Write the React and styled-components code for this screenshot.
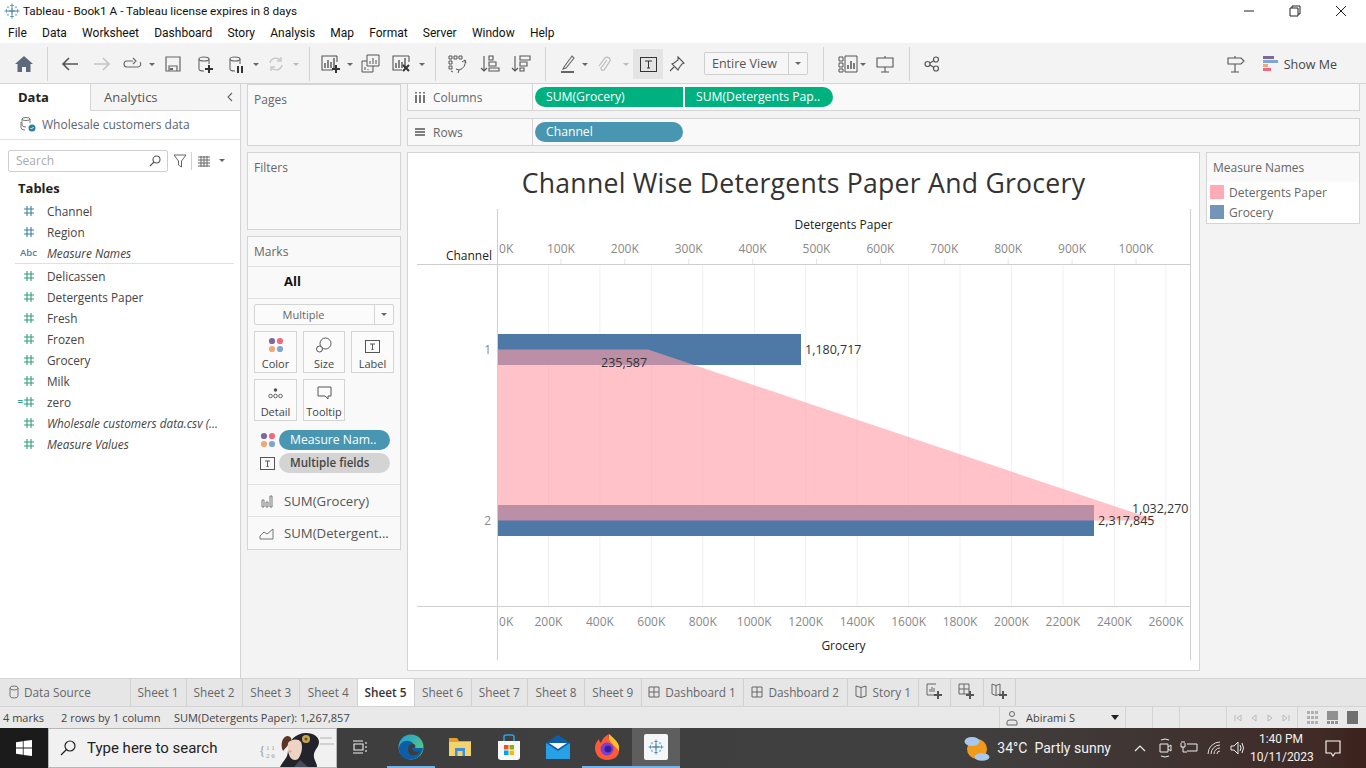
import React from 'react';
import styled, { createGlobalStyle } from 'styled-components';

const GlobalStyle = createGlobalStyle`
  html, body { margin: 0; padding: 0; overflow: hidden; background: #fff; }
  * { box-sizing: border-box; }
  body { font-family: "Open Sans", "Liberation Sans", sans-serif; color: #333; }
`;

const Page = styled.div`
  width: 1366px;
  height: 768px;
  display: flex;
  flex-direction: column;
  overflow: hidden;
`;

/* ---------- window chrome ---------- */
const TitleBar = styled.div`
  height: 22px;
  display: flex;
  align-items: center;
  padding-left: 4px;
  gap: 3px;
  font-family: Roboto, sans-serif;
  font-size: 11.75px;
  color: #111;
  background: #fff;
`;
const WindowButtons = styled.div`
  margin-left: auto;
  display: flex;
  align-items: center;
  padding-right: 2px;
`;
const WindowButton = styled.span`
  width: 46px;
  height: 22px;
  display: flex;
  align-items: center;
  justify-content: center;
`;
const MenuBar = styled.nav`
  height: 21px;
  display: flex;
  align-items: center;
  gap: 15.2px;
  padding-left: 8px;
  font-family: Roboto, sans-serif;
  font-size: 12px;
  color: #111;
  background: #fff;
`;

/* ---------- toolbar ---------- */
const Toolbar = styled.div`
  height: 41px;
  display: flex;
  align-items: center;
  padding-top: 2px;
  background: #f3f3f3;
  border-bottom: 1px solid #d4d4d4;
`;
const ToolSlot = styled.span`
  width: ${p => p.$w}px;
  height: 30px;
  flex: none;
  display: flex;
  align-items: center;
  justify-content: center;
  margin-left: ${p => p.$ml || 0}px;
  margin-right: ${p => p.$mr || 0}px;
  background: ${p => (p.$active ? '#e4e4e4' : 'transparent')};
`;
const ToolSep = styled.span`
  width: 1px;
  height: 34px;
  flex: none;
  background: #d2d2d2;
  margin-left: ${p => p.$ml || 0}px;
  margin-right: ${p => p.$mr || 0}px;
`;
const Caret = styled.span`
  width: 0;
  height: 0;
  border-left: 3px solid transparent;
  border-right: 3px solid transparent;
  border-top: 3px solid ${p => p.$color || '#666'};
`;
const FitSelect = styled.div`
  width: 104px;
  height: 23px;
  margin: -1px 0 0 13px;
  flex: none;
  display: flex;
  align-items: center;
  border: 1px solid #cfcfcf;
  border-radius: 2px;
  font-size: 12.5px;
  color: #555;
  background: #f6f6f6;
`;
const FitLabel = styled.span`
  flex: 1;
  padding-left: 7px;
  border-right: 1px solid #cfcfcf;
  line-height: 21px;
`;
const FitArrow = styled.span`
  width: 18px;
  display: flex;
  justify-content: center;
`;
const ToolRight = styled.div`
  margin-left: auto;
  display: flex;
  align-items: center;
  padding-right: 29px;
`;
const ShowMe = styled.div`
  margin-left: 17px;
  display: flex;
  align-items: center;
  gap: 6px;
  font-size: 12.5px;
  color: #444;
`;

/* ---------- workspace ---------- */
const Workspace = styled.div`
  height: 594px;
  display: flex;
  background: #f3f3f3;
`;
const DataPane = styled.aside`
  width: 241px;
  flex: none;
  display: flex;
  flex-direction: column;
  background: #fff;
  border-right: 1px solid #d4d4d4;
`;
const PaneTabs = styled.div`
  height: 27px;
  display: flex;
  font-size: 13px;
`;
const DataTab = styled.div`
  width: 90px;
  padding-left: 18px;
  line-height: 26px;
  font-weight: 700;
  color: #222;
`;
const AnalyticsTab = styled.div`
  flex: 1;
  display: flex;
  align-items: center;
  justify-content: space-between;
  padding: 0 5px 0 13px;
  background: #f5f5f5;
  border-left: 1px solid #d4d4d4;
  border-bottom: 1px solid #d4d4d4;
  color: #555;
`;
const SourceRow = styled.div`
  height: 29px;
  display: flex;
  align-items: center;
  gap: 6px;
  padding: 0 0 2px 20px;
  font-size: 12px;
  color: #5a6472;
  border-bottom: 1px solid #e4e4e4;
`;
const SearchRow = styled.div`
  height: 38px;
  display: flex;
  align-items: center;
  padding: 3px 0 0 8px;
`;
const SearchBox = styled.div`
  width: 160px;
  height: 22px;
  display: flex;
  align-items: center;
  justify-content: space-between;
  padding: 0 6px 0 7px;
  border: 1px solid #cfcfcf;
  border-radius: 2px;
  font-size: 12px;
  color: #aaa;
`;
const FilterSep = styled(ToolSep)`
  height: 18px;
`;
const TablesHead = styled.div`
  font-size: 13px;
  font-weight: 700;
  color: #222;
  padding: 0 0 0 18px;
  height: 22px;
  line-height: 20px;
`;
const FieldRow = styled.div`
  height: 21px;
  display: flex;
  align-items: center;
  font-size: 11.8px;
  font-style: ${p => (p.$italic ? 'italic' : 'normal')};
  color: #444;
  white-space: nowrap;
`;
const FieldIcon = styled.span`
  width: 47px;
  flex: none;
  display: flex;
  align-items: center;
  justify-content: flex-end;
  padding-right: ${p => p.$pr ?? 13}px;
  font-size: 9.5px;
  font-style: normal;
  font-weight: 600;
  color: #4a7f9e;
`;
const CalcMark = styled.span`
  margin-right: 1px;
  line-height: 10px;
  color: #2f9e7e;
`;
const FieldDivider = styled.div`
  height: 1px;
  margin: 0 6px 1px 15px;
  background: #e0e0e0;
`;

const CardColumn = styled.div`
  width: 154px;
  flex: none;
  margin: 0 6px;
  display: flex;
  flex-direction: column;
  gap: 6px;
`;
const Card = styled.section`
  height: ${p => p.$h}px;
  flex: none;
  background: #f9f9f9;
  border: 1px solid #d4d4d4;
  font-size: 12px;
  color: #666;
`;
const CardTitle = styled.div`
  padding: 6px 6px 0;
`;
const MarksTitle = styled.div`
  height: 30px;
  line-height: 29px;
  padding-left: 6px;
  border-bottom: 1px solid #e0e0e0;
`;
const MarksAll = styled.div`
  height: 32px;
  line-height: 28px;
  padding-left: 36px;
  font-size: 13px;
  font-weight: 700;
  color: #111;
  border-bottom: 1px solid #e0e0e0;
`;
const MarkType = styled.div`
  height: 21px;
  margin: 5px 6px 6px;
  display: flex;
  align-items: center;
  background: #fbfbfb;
  border: 1px solid #d4d4d4;
  border-radius: 2px;
  font-size: 11px;
  color: #666;
`;
const MarkTypeLabel = styled.span`
  flex: 1;
  padding-right: 22px;
  text-align: center;
  border-right: 1px solid #d4d4d4;
  line-height: 19px;
`;
const MarkTypeArrow = styled.span`
  width: 18px;
  display: flex;
  justify-content: center;
`;
const MarkButtons = styled.div`
  display: grid;
  grid-template-columns: 43px 42px 43px;
  grid-auto-rows: 42px;
  justify-content: space-between;
  gap: 6px;
  margin: 0 6px 9px;
`;
const MarkButton = styled.div`
  display: flex;
  flex-direction: column;
  align-items: center;
  justify-content: flex-end;
  gap: 3px;
  padding-bottom: 1px;
  border: 1px solid #d4d4d4;
  background: #fbfbfb;
  font-size: 11px;
  color: #444;
`;
const PillRow = styled.div`
  height: 20px;
  margin-bottom: 3px;
  display: flex;
  align-items: center;
  padding-right: 10px;
`;
const PillIcon = styled.span`
  width: 31px;
  padding-left: 12px;
  flex: none;
  display: flex;
`;
const Pill = styled.span`
  display: block;
  flex: ${p => (p.$w ? 'none' : 1)};
  width: ${p => (p.$w ? `${p.$w}px` : 'auto')};
  height: 20px;
  line-height: 20px;
  padding-left: 11px;
  border-radius: ${p => p.$radius || '10px'};
  background: ${p => p.$bg};
  color: ${p => p.$fg || '#fff'};
  font-size: ${p => p.$size || 12.2}px;
  font-weight: ${p => p.$weight || 400};
  white-space: nowrap;
  overflow: hidden;
`;
const MarksSpacer = styled.div`
  height: 8px;
`;
const MeasureRow = styled.div`
  height: 32px;
  display: flex;
  align-items: center;
  gap: 9px;
  padding-left: 11px;
  border-top: 1px solid #e0e0e0;
  font-size: 13.2px;
  color: #555;
  white-space: nowrap;
`;

const MainColumn = styled.div`
  width: 953px;
  flex: none;
  display: flex;
  flex-direction: column;
`;
const Shelf = styled.div`
  height: ${p => p.$h}px;
  margin-bottom: ${p => p.$mb}px;
  flex: none;
  display: flex;
  align-items: center;
  background: #f9f9f9;
  border: 1px solid #d4d4d4;
  border-top-width: ${p => (p.$flat ? 0 : 1)}px;
`;
const ShelfLabel = styled.div`
  width: 125px;
  height: 100%;
  flex: none;
  display: flex;
  align-items: center;
  gap: 7px;
  padding-left: 6px;
  font-size: 12px;
  color: #666;
  border-right: 1px solid #d4d4d4;
`;
const ShelfPills = styled.div`
  display: flex;
  gap: 2px;
  padding-left: 2px;
`;
const ChartRow = styled.div`
  display: flex;
  gap: 6px;
  align-items: flex-start;
`;
const ChartCard = styled.div`
  width: 793px;
  height: 519px;
  display: flex;
  flex-direction: column;
  background: #fff;
  border: 1px solid #d4d4d4;
`;
const ChartTitle = styled.h1`
  margin: 0;
  height: 56px;
  padding-top: 12px;
  text-align: center;
  font-size: 26.6px;
  line-height: 36px;
  font-weight: 400;
  letter-spacing: 0.25px;
  color: #333;
`;
const ChartSvg = styled.svg`
  display: block;
  width: 791px;
  height: 461px;
  font-family: "Open Sans", "Liberation Sans", sans-serif;
`;
const Legend = styled.div`
  width: 154px;
  height: 72px;
  background: #fff;
  border: 1px solid #d4d4d4;
`;
const LegendTitle = styled.div`
  height: 29px;
  line-height: 29px;
  padding-left: 6px;
  background: #f9f9f9;
  font-size: 12px;
  color: #666;
`;
const LegendRow = styled.div`
  height: 20px;
  display: flex;
  align-items: center;
  gap: 5px;
  padding-left: 3px;
  font-size: 12px;
  color: #666;
`;
const Swatch = styled.span`
  width: 14px;
  height: 14px;
  background: ${p => p.$color};
`;

/* ---------- tabs and status ---------- */
const SheetTabs = styled.div`
  height: 29px;
  display: flex;
  background: #e6e6e6;
  border-top: 1px solid #d4d4d4;
  border-bottom: 1px solid #d4d4d4;
  font-size: 11.8px;
  color: #666;
`;
const SheetTab = styled.div`
  width: ${p => p.$w}px;
  flex: none;
  display: flex;
  align-items: center;
  justify-content: ${p => (p.$start ? 'flex-start' : 'center')};
  gap: 5px;
  padding-left: ${p => (p.$start ? 9 : 0)}px;
  padding-bottom: 2px;
  border-right: 1px solid #d0d0d0;
  white-space: nowrap;
  background: ${p => (p.$active ? '#fff' : 'transparent')};
  color: ${p => (p.$active ? '#333' : '#666')};
  font-weight: ${p => (p.$active ? 600 : 400)};
`;
const StatusBar = styled.div`
  height: 21px;
  display: flex;
  align-items: center;
  background: #e9e9e9;
  font-size: 11px;
  color: #444;
  white-space: nowrap;
`;
const StatusText = styled.span`
  width: ${p => p.$w}px;
  flex: none;
  padding-left: ${p => p.$pl || 0}px;
`;
const UserCell = styled.div`
  width: 127px;
  height: 100%;
  flex: none;
  display: flex;
  align-items: center;
  gap: 8px;
  padding: 0 6px;
  border-left: 1px solid #d4d4d4;
  border-right: 1px solid #d4d4d4;
`;
const UserName = styled.span`
  flex: 1;
`;
const UserCaret = styled(Caret)`
  border-width: 5px 4px 0;
`;
const EmptyCell = styled.div`
  width: ${p => p.$w}px;
  height: 100%;
  flex: none;
  display: flex;
  align-items: center;
  justify-content: center;
  gap: ${p => p.$gap || 0}px;
  border-right: 1px solid #d4d4d4;
`;
const ViewIcons = styled.div`
  width: 68px;
  flex: none;
  display: flex;
  align-items: center;
  justify-content: center;
  gap: 9px;
`;

/* ---------- windows taskbar ---------- */
const Taskbar = styled.div`
  height: 40px;
  display: flex;
  align-items: center;
  font-family: Roboto, sans-serif;
  color: #fff;
  background: linear-gradient(to right, #3d3d3d 0%, #404040 70%, #3f2a26 97%, #3d211c 100%);
`;
const StartButton = styled.div`
  width: 48px;
  height: 100%;
  flex: none;
  display: flex;
  align-items: center;
  justify-content: center;
  background: #1b1b1b;
`;
const TaskSearch = styled.div`
  width: 289px;
  height: 100%;
  flex: none;
  display: flex;
  align-items: center;
  gap: 11px;
  padding-left: 11px;
  background: #f1f1f1;
  border: 1px solid #b8b8b8;
  font-size: 15px;
  color: #222;
  overflow: hidden;
`;
const Doodle = styled.span`
  margin-left: auto;
  display: flex;
`;
const TaskApp = styled.div`
  width: ${p => p.$w || 49}px;
  height: 100%;
  flex: none;
  margin-left: ${p => p.$ml || 0}px;
  display: flex;
  align-items: center;
  justify-content: center;
  background: ${p => (p.$active ? '#5e5e5e' : 'transparent')};
  border-bottom: 2px solid ${p => (p.$open ? '#76b3e8' : 'transparent')};
`;
const Tray = styled.div`
  margin-left: auto;
  height: 100%;
  display: flex;
  align-items: center;
  font-size: 14px;
  white-space: nowrap;
`;
const TrayText = styled.span`
  margin-left: ${p => p.$ml || 0}px;
  color: #f2f2f2;
`;
const TrayIcon = styled.span`
  width: ${p => p.$w}px;
  flex: none;
  display: flex;
  justify-content: center;
  margin-left: ${p => p.$ml || 0}px;
  padding-right: ${p => p.$pr || 0}px;
`;
const Clock = styled.div`
  width: 62px;
  margin-left: 2px;
  text-align: center;
  font-size: 12px;
  line-height: 18px;
  color: #f2f2f2;
`;

/* ---------- icons ---------- */
const Ico = ({ s = 22, h, children, c = '#555', w = 1.3 }) => (
  <svg width={s} height={h || s} viewBox={`0 0 ${s} ${h || s}`} fill="none" stroke={c} strokeWidth={w}>
    {children}
  </svg>
);
const TableauLogo = ({ s = 16, c = '#4a86ad' }) => (
  <svg width={s} height={s} viewBox="0 0 16 16" stroke={c} fill="none">
    <path d="M8 4.500v7M4.500 8h7" strokeWidth="1.300" />
    <path d="M8 .5v4M6.300 2.500h3.400M8 11.500v4M6.300 13.500h3.400M.5 8h4M2.500 6.300v3.400M11.500 8h4M13.500 6.300v3.400" strokeWidth=".9" />
    <path d="M4 3v2.400M2.800 4.200h2.400M12 3v2.400M10.800 4.200h2.400M4 10.600V13M2.800 11.800h2.400M12 10.600V13M10.800 11.800h2.400" strokeWidth=".8" stroke="#7fb0cf" />
  </svg>
);
const Hash = ({ c = '#2f9e7e' }) => (
  <svg width="10" height="10" viewBox="0 0 10 10" stroke={c} strokeWidth="1.1" fill="none">
    <path d="M3 0v10M7 0v10M0 3h10M0 7h10" />
  </svg>
);
const Dots = () => (
  <svg width="16" height="16" viewBox="0 0 16 16">
    <circle cx="4" cy="4" r="3.100" fill="#7b6a9b" />
    <circle cx="12" cy="4" r="3.100" fill="#f2697f" />
    <circle cx="4" cy="12" r="3.100" fill="#f0a878" />
    <circle cx="12" cy="12" r="3.100" fill="#7ea6d3" />
  </svg>
);
const TBox = ({ s = 15 }) => (
  <svg width={s} height={s - 2} viewBox="0 0 15 13" fill="none" stroke="#555">
    <rect x=".5" y=".5" width="14" height="12" />
    <path d="M5 4h5M7.500 4v5.500M6.500 9.500h2" />
  </svg>
);

const Plus = ({ x, y, c = '#333' }) => (
  <path d={`M${x - 4} ${y}h8M${x} ${y - 4}v8`} stroke={c} strokeWidth="2" />
);
const Cylinder = () => (
  <>
    <ellipse cx="9" cy="5" rx="5" ry="2" />
    <path d="M4 5v10q0 2 5 2M14 5v5" />
  </>
);
const MiniChart = ({ x = 0 }) => (
  <path d={`M${x + 5} 15V10M${x + 8} 15V7M${x + 11} 15V9M${x + 14} 15V5`} strokeWidth="1.400" />
);

const Fields = [
  ['Channel', '#3a7f9f'],
  ['Region', '#3a7f9f'],
];
const Measures = ['Delicassen', 'Detergents Paper', 'Fresh', 'Frozen', 'Grocery', 'Milk'];

const topTicks = Array.from({ length: 11 }, (_, i) => i);
const bottomTicks = Array.from({ length: 14 }, (_, i) => i);
const topX = i => 497 + i * 63.9;
const bottomX = i => 497 + i * 51.45;

function Chart() {
  return (
    <ChartSvg viewBox="408 209 791 461">
      {bottomTicks.slice(1).map(i => (
        <line key={i} x1={bottomX(i)} x2={bottomX(i)} y1="264" y2="606" stroke="#f0f0f0" />
      ))}
      {topTicks.slice(1).map(i => (
        <line key={i} x1={topX(i)} x2={topX(i)} y1="259" y2="264" stroke="#e4e4e4" />
      ))}
      <line x1="497.500" x2="497.500" y1="209" y2="660" stroke="#cfcfcf" />
      <line x1="1190.500" x2="1190.500" y1="209" y2="660" stroke="#cfcfcf" />
      <line x1="417" x2="1190" y1="264.500" y2="264.500" stroke="#cfcfcf" />
      <line x1="417" x2="1190" y1="606.500" y2="606.500" stroke="#cfcfcf" />

      <rect x="498" y="334" width="303" height="31" fill="#4e79a7" />
      <rect x="498" y="505" width="596" height="31" fill="#4e79a7" />
      <polygon points="498,349.500 648,349.500 1157,520.500 498,520.500" fill="#ff9da7" fillOpacity="0.62" />

      <g fontSize="12.500" fill="#333">
        <text x="805" y="354">1,180,717</text>
        <text x="601" y="367">235,587</text>
        <text x="1132" y="513">1,032,270</text>
        <text x="1098" y="525">2,317,845</text>
      </g>
      <g fontSize="12" fill="#888">
        <text x="491" y="354" textAnchor="end">1</text>
        <text x="491" y="525" textAnchor="end">2</text>
        {topTicks.map(i => (
          <text key={i} x={i === 0 ? 499 : topX(i)} y="253" textAnchor={i === 0 ? 'start' : 'middle'}>
            {i * 100}K
          </text>
        ))}
        {bottomTicks.map(i => (
          <text key={i} x={i === 0 ? 499 : bottomX(i)} y="626" textAnchor={i === 0 ? 'start' : 'middle'}>
            {i * 200}K
          </text>
        ))}
      </g>
      <g fontSize="12" fontWeight="500" fill="#222">
        <text x="492" y="260" textAnchor="end">Channel</text>
        <text x="843.500" y="229" textAnchor="middle">Detergents Paper</text>
        <text x="843.500" y="650" textAnchor="middle">Grocery</text>
      </g>
    </ChartSvg>
  );
}

function TopToolbar() {
  return (
    <Toolbar>
      <ToolSlot $w={47}>
        <svg width="18" height="16" viewBox="0 0 18 16" fill="#5b6b7b">
          <path d="M9 0 18 8h-2.500v8H11v-5H7v5H2.500V8H0z" />
        </svg>
      </ToolSlot>
      <ToolSep $mr={6} />
      <ToolSlot $w={32}>
        <Ico s={18} c="#555" w={1.6}><path d="M17 9H2M8 3 2 9l6 6" /></Ico>
      </ToolSlot>
      <ToolSlot $w={32}>
        <Ico s={18} c="#c4c4c4" w={1.6}><path d="M1 9h15M10 3l6 6-6 6" /></Ico>
      </ToolSlot>
      <ToolSlot $w={28}>
        <Ico s={20} c="#666" w={1.1}><path d="M11 7H5a3 3 0 0 0 0 6h11a3 3 0 0 0 2-5M11 4l3 3-3 3" /></Ico>
      </ToolSlot>
      <ToolSlot $w={12}><Caret /></ToolSlot>
      <ToolSlot $w={30}>
        <Ico s={18} c="#666" w={1.2}><path d="M2 2h14v14H2zM5 16v-5h8v5" /><path d="M6 14h3" strokeWidth="2" /></Ico>
      </ToolSlot>
      <ToolSlot $w={34}>
        <Ico s={20} c="#666" w={1.1}><Cylinder /><Plus x={14} y={15} /></Ico>
      </ToolSlot>
      <ToolSlot $w={28}>
        <Ico s={20} c="#666" w={1.1}><Cylinder /><path d="M12 12v7M16 12v7" stroke="#333" strokeWidth="2" /></Ico>
      </ToolSlot>
      <ToolSlot $w={12}><Caret /></ToolSlot>
      <ToolSlot $w={28}>
        <Ico s={18} c="#c8c8c8" w={1.4}><path d="M3 8a6 6 0 0 1 11-2M15 10a6 6 0 0 1-11 2M14 2v4h-4M4 16v-4h4" /></Ico>
      </ToolSlot>
      <ToolSlot $w={12}><Caret $color="#bbb" /></ToolSlot>
      <ToolSep $ml={7} $mr={6} />
      <ToolSlot $w={30}>
        <Ico s={22} c="#555" w={1.1}><path d="M13 3H2v14h11M17 3v6" /><path d="M13 3h4" /><MiniChart x={0} /><Plus x={16} y={16} /></Ico>
      </ToolSlot>
      <ToolSlot $w={8}><Caret /></ToolSlot>
      <ToolSlot $w={34}>
        <Ico s={20} c="#555" w={1}><path d="M6 1h12v11H6zM1 7h5M1 7v11h11v-6" /><path d="M9 10V7M12 10V4M15 10V6M4 16v-3M7 16v-1" /></Ico>
      </ToolSlot>
      <ToolSlot $w={28}>
        <Ico s={22} c="#555" w={1.1}><path d="M14 3H2v14h9M18 3v6M14 3h4" /><MiniChart x={0} /><path d="M12 12l6 6M18 12l-6 6" stroke="#333" strokeWidth="2" /></Ico>
      </ToolSlot>
      <ToolSlot $w={12}><Caret /></ToolSlot>
      <ToolSep $ml={7} $mr={6} />
      <ToolSlot $w={30}>
        <Ico s={20} c="#555" w={1}><path d="M2 2h3v3H2zM7 2h3v3H7zM12 2h3v3h-3zM2 7h3v3H2zM2 12h3v3H2z" /><path d="M18 6a8 8 0 0 1-6 10M6 18l-2-1M15 8l3-2 1 3M9 15l3 1-1 3" /></Ico>
      </ToolSlot>
      <ToolSlot $w={36}>
        <Ico s={20} c="#555" w={1.1}><path d="M4 2v15M1 14l3 3 3-3" /><path d="M9 2h4v4H9zM9 8h7v4H9zM9 14h10v3H9z" /></Ico>
      </ToolSlot>
      <ToolSlot $w={26}>
        <Ico s={20} c="#555" w={1.1}><path d="M4 2v15M1 14l3 3 3-3" /><path d="M9 2h10v4H9zM9 8h7v4H9zM9 14h4v3H9z" /></Ico>
      </ToolSlot>
      <ToolSep $ml={11} $mr={8} />
      <ToolSlot $w={28}>
        <Ico s={18} c="#666" w={1.1}><path d="M5 12 13 1l2 2-8 10-3 1z" /><path d="M2 17h13" strokeWidth="2" /></Ico>
      </ToolSlot>
      <ToolSlot $w={6}><Caret /></ToolSlot>
      <ToolSlot $w={32}>
        <Ico s={18} c="#bbb" w={1.2}><path d="M12 5 6 13a2 2 0 0 0 3 2l6-9a3 3 0 0 0-5-3L4 11" /></Ico>
      </ToolSlot>
      <ToolSlot $w={12}><Caret $color="#bbb" /></ToolSlot>
      <ToolSlot $w={30} $ml={1} $active>
        <svg width="17" height="15" viewBox="0 0 17 15" fill="none" stroke="#333">
          <rect x=".5" y=".5" width="16" height="14" />
          <path d="M5 4h7M8.500 4v7M7 11h3" />
        </svg>
      </ToolSlot>
      <ToolSlot $w={28}>
        <Ico s={16} c="#555" w={1.1}><path d="M9 1l6 6-2 1-3 4-1 2-6-6 2-1 4-3zM5 11l-4 4" /></Ico>
      </ToolSlot>
      <FitSelect>
        <FitLabel>Entire View</FitLabel>
        <FitArrow><Caret /></FitArrow>
      </FitSelect>
      <ToolSep $ml={15} />
      <ToolSlot $w={22} $ml={13}>
        <Ico s={20} c="#555" w={1}><path d="M1 3h4v4H1zM1 9h4v4H1zM1 15h4v3H1zM7 2h12v16H7z" /><path d="M10 15v-4M13 15V7M16 15V9" strokeWidth="1.500" /></Ico>
      </ToolSlot>
      <ToolSlot $w={8}><Caret /></ToolSlot>
      <ToolSlot $w={36}>
        <Ico s={18} c="#555" w={1.1}><path d="M1 3h16v9H1zM9 12v5M5 17h8M9 1v2" /></Ico>
      </ToolSlot>
      <ToolSep $ml={6} $mr={6} />
      <ToolSlot $w={32}>
        <Ico s={16} c="#555" w={1.2}>
          <circle cx="3.500" cy="8" r="2.500" />
          <circle cx="12" cy="3.500" r="2.500" />
          <circle cx="12" cy="12.500" r="2.500" />
          <path d="M6 7l4-2.500M6 9l4 2.500" />
        </Ico>
      </ToolSlot>
      <ToolRight>
        <Ico s={20} c="#555" w={1.1}><path d="M2 4h13l3 3-3 3H2zM9 10v8M5 18h8M9 2v2" /></Ico>
        <ShowMe>
          <svg width="15" height="16" viewBox="0 0 15 16">
            <rect width="11" height="3" fill="#7b6a9b" />
            <rect y="4" width="15" height="3" fill="#7ea6d3" />
            <rect y="8" width="5" height="3" fill="#f0a878" />
            <rect y="12" width="8" height="3" fill="#f2697f" />
          </svg>
          Show Me
        </ShowMe>
      </ToolRight>
    </Toolbar>
  );
}

function DataSidebar() {
  return (
    <DataPane>
      <PaneTabs>
        <DataTab>Data</DataTab>
        <AnalyticsTab>
          Analytics
          <Ico s={10} c="#666" w={1.1}><path d="M7 1 3 5l4 4" /></Ico>
        </AnalyticsTab>
      </PaneTabs>
      <SourceRow>
        <svg width="16" height="16" viewBox="0 0 16 16" fill="none" stroke="#777">
          <ellipse cx="6" cy="3" rx="4" ry="1.500" />
          <path d="M2 3v6q0 2 4 2M10 3v4M1 6v6q0 2 4 2" />
          <circle cx="12" cy="12" r="3.500" fill="#2e7fa8" stroke="none" />
          <path d="M10.500 12l1 1 2-2" stroke="#fff" />
        </svg>
        Wholesale customers data
      </SourceRow>
      <SearchRow>
        <SearchBox>
          Search
          <Ico s={12} c="#555" w={1.1}><circle cx="7.500" cy="4.500" r="3.500" /><path d="M5 7l-4 4" /></Ico>
        </SearchBox>
        <ToolSlot $w={23}>
          <Ico s={14} c="#666" w={1}><path d="M1 1h12L8.500 7v6l-3-2V7z" /></Ico>
        </ToolSlot>
        <FilterSep />
        <ToolSlot $w={24}>
          <Ico s={12} c="#666" w={1}><path d="M0 2h12M0 5h12M0 8h12M0 11h12M3 1v11M6 1v11M9 1v11" /></Ico>
        </ToolSlot>
        <ToolSlot $w={12}><Caret /></ToolSlot>
      </SearchRow>
      <TablesHead>Tables</TablesHead>
      {Fields.map(([name, color]) => (
        <FieldRow key={name}>
          <FieldIcon><Hash c={color} /></FieldIcon>
          {name}
        </FieldRow>
      ))}
      <FieldRow $italic>
        <FieldIcon $pr={10}>Abc</FieldIcon>
        Measure Names
      </FieldRow>
      <FieldDivider />
      {Measures.map(name => (
        <FieldRow key={name}>
          <FieldIcon><Hash /></FieldIcon>
          {name}
        </FieldRow>
      ))}
      <FieldRow>
        <FieldIcon><CalcMark>=</CalcMark><Hash /></FieldIcon>
        zero
      </FieldRow>
      <FieldRow $italic>
        <FieldIcon><Hash /></FieldIcon>
        Wholesale customers data.csv (...
      </FieldRow>
      <FieldRow $italic>
        <FieldIcon><Hash /></FieldIcon>
        Measure Values
      </FieldRow>
    </DataPane>
  );
}

function MarksCard() {
  return (
    <Card $h={314}>
      <MarksTitle>Marks</MarksTitle>
      <MarksAll>All</MarksAll>
      <MarkType>
        <MarkTypeLabel>Multiple</MarkTypeLabel>
        <MarkTypeArrow><Caret /></MarkTypeArrow>
      </MarkType>
      <MarkButtons>
        <MarkButton><Dots />Color</MarkButton>
        <MarkButton>
          <Ico s={16} c="#555" w={1}><circle cx="9.500" cy="6.500" r="5.500" /><circle cx="3.500" cy="12" r="3" fill="#fbfbfb" /></Ico>
          Size
        </MarkButton>
        <MarkButton><TBox />Label</MarkButton>
        <MarkButton>
          <Ico s={15} c="#555" w={.9}>
            <circle cx="7.500" cy="4" r="1.800" fill="#555" stroke="none" />
            <circle cx="2.500" cy="10" r="1.800" />
            <circle cx="7.500" cy="10" r="1.800" />
            <circle cx="12.500" cy="10" r="1.800" />
          </Ico>
          Detail
        </MarkButton>
        <MarkButton>
          <Ico s={15} c="#555" w={1}><path d="M1 1h13v9h-3v3l-3-3H1z" /></Ico>
          Tooltip
        </MarkButton>
      </MarkButtons>
      <PillRow>
        <PillIcon><Dots /></PillIcon>
        <Pill $bg="#4996b2">Measure Nam..</Pill>
      </PillRow>
      <PillRow>
        <PillIcon><TBox /></PillIcon>
        <Pill $bg="#d4d4d4" $fg="#444" $weight={600} $size={11.6}>Multiple fields</Pill>
      </PillRow>
      <MarksSpacer />
      <MeasureRow>
        <Ico s={16} c="#777" w={1}><path d="M3 7h2v7H3zM7 9h2v5H7zM11 3h2v11h-2z" /></Ico>
        SUM(Grocery)
      </MeasureRow>
      <MeasureRow>
        <Ico s={16} c="#777" w={1}><path d="M1 14h13V4L8 9 5 7l-4 4z" /></Ico>
        SUM(Detergent...
      </MeasureRow>
    </Card>
  );
}

function TabStrip() {
  const sheets = [56, 56, 57.5, 57.5, 57, 57, 56.5, 57, 56.5];
  return (
    <SheetTabs>
      <SheetTab $w={130.5} $start>
        <Ico s={10} h={14} c="#777" w={1}><ellipse cx="5" cy="3" rx="4" ry="2" /><path d="M1 3v8q0 2 4 2t4-2V3" /></Ico>
        Data Source
      </SheetTab>
      {sheets.map((w, i) => (
        <SheetTab key={i} $w={w} $active={i === 4}>Sheet {i + 1}</SheetTab>
      ))}
      <SheetTab $w={102}>
        <Ico s={12} c="#666" w={1}><path d="M1 1h10v10H1zM6 1v10M1 6h10" /></Ico>
        Dashboard 1
      </SheetTab>
      <SheetTab $w={104.5}>
        <Ico s={12} c="#666" w={1}><path d="M1 1h10v10H1zM6 1v10M1 6h10" /></Ico>
        Dashboard 2
      </SheetTab>
      <SheetTab $w={70.5}>
        <Ico s={13} c="#666" w={1}><path d="M1 1l5 1.500L11 1v10l-5 1.500L1 11zM6 2.500v10" /></Ico>
        Story 1
      </SheetTab>
      <SheetTab $w={32}>
        <Ico s={17} c="#666" w={1}><path d="M10 1H1v11h7M4 9V6M6 9V4M8 9V5" /><Plus x={12} y={12} c="#555" /></Ico>
      </SheetTab>
      <SheetTab $w={33}>
        <Ico s={17} c="#666" w={1}><path d="M1 1h10v10H1zM6 1v10M1 6h10" /><Plus x={12} y={12} c="#555" /></Ico>
      </SheetTab>
      <SheetTab $w={32}>
        <Ico s={17} c="#666" w={1}><path d="M1 1l4 1.500L9 1v10l-4 1.500L1 11zM5 2.500v10" /><Plus x={12} y={12} c="#555" /></Ico>
      </SheetTab>
    </SheetTabs>
  );
}

function Status() {
  return (
    <StatusBar>
      <StatusText $w={61} $pl={3}>4 marks</StatusText>
      <StatusText $w={113}>2 rows by 1 column</StatusText>
      <StatusText $w={825}>SUM(Detergents Paper): 1,267,857</StatusText>
      <UserCell>
        <Ico s={12} h={16} c="#666" w={1}><circle cx="6" cy="4" r="2.500" /><path d="M1 15v-3q0-2 3-2h4q3 0 3 2v3z" /></Ico>
        <UserName>Abirami S</UserName>
        <UserCaret $color="#222" />
      </UserCell>
      <EmptyCell $w={27} />
      <EmptyCell $w={27} />
      <EmptyCell $w={47} />
      <EmptyCell $w={71} $gap={8}>
        <Ico s={8} c="#bbb" w={1}><path d="M1 1v6M7 1 3 4l4 3z" /></Ico>
        <Ico s={8} c="#bbb" w={1}><path d="M6 1 2 4l4 3z" /></Ico>
        <Ico s={8} c="#bbb" w={1}><path d="M2 1l4 3-4 3z" /></Ico>
        <Ico s={8} c="#bbb" w={1}><path d="M7 1v6M1 1l4 3-4 3z" /></Ico>
      </EmptyCell>
      <ViewIcons>
        <svg width="11" height="13" viewBox="0 0 11 13" fill="#b0b0b0"><path d="M0 0h3v3H0zM4 0h3v3H4zM8 0h3v3H8zM0 5h3v3H0zM4 5h3v3H4zM8 5h3v3H8zM0 10h3v3H0zM4 10h3v3H4zM8 10h3v3H8z" /></svg>
        <svg width="11" height="13" viewBox="0 0 11 13" fill="#909090"><path d="M0 0h11v9H0zM0 10h3v3H0zM4 10h3v3H4zM8 10h3v3H8z" /></svg>
        <svg width="11" height="13" viewBox="0 0 11 13" fill="#707070"><path d="M0 0h11v13H0z" /></svg>
      </ViewIcons>
    </StatusBar>
  );
}

function WindowsTaskbar() {
  return (
    <Taskbar>
      <StartButton>
        <svg width="16" height="16" viewBox="0 0 16 16" fill="#fff">
          <path d="M0 2.200 6.800 1.200v6.400H0zM7.600 1.100 16 0v7.600H7.600zM0 8.400h6.800v6.400L0 13.800zM7.600 8.400H16V16l-8.400-1.100z" />
        </svg>
      </StartButton>
      <TaskSearch>
        <Ico s={16} c="#222" w={1.2}><circle cx="10" cy="6" r="5" /><path d="M6.500 9.500 1 15" /></Ico>
        Type here to search
        <Doodle>
          <svg width="78" height="38" viewBox="0 0 78 38">
            <text x="1" y="26" fontSize="13" fill="#999" fontFamily="Liberation Serif, serif">{'{'}</text>
            <text x="8" y="21" fontSize="7" fill="#999" fontFamily="Liberation Serif, serif">1 1</text>
            <text x="8" y="29" fontSize="7" fill="#999" fontFamily="Liberation Serif, serif">2 6</text>
            <path d="M62 9h12M62 15h14" stroke="#aaa" strokeWidth=".9" />
            <path d="M22 38c4-8 8-8 8-18 0-8 8-16 18-16 8 0 13 4 13 9s-4 7-5 12c-1 6 3 8 3 13z" fill="#23232b" />
            <path d="M25 22c-3-6-1-14 4-15 5 0 5 4 3 7z" fill="#5b3526" />
            <path d="M30 14c3-4 10-5 13-1 2 4 1 12-3 17-3 2-6 1-8-2-2-4-3-9-2-14z" fill="#ecd3c4" />
            <path d="M30 22c1-1 3-1 4 0-1 2-3 2-4 0z" fill="#e8a0a0" />
            <circle cx="48" cy="10" r="4" fill="#c8a650" />
            <circle cx="48" cy="10" r="1.500" fill="#6a5520" />
            <path d="M36 38l6-7 8 7z" fill="#4b4b58" />
          </svg>
        </Doodle>
      </TaskSearch>
      <TaskApp $w={46}>
        <Ico s={16} c="#eee" w={1.1}><path d="M1 2h10M1 14h10M2 5h9v6H2zM14 3v2M14 7v2M14 11v2" /></Ico>
      </TaskApp>
      <TaskApp $w={48} $ml={4} $open>
        <svg width="26" height="26" viewBox="0 0 26 26">
          <defs>
            <linearGradient id="edgeTop" x1="0" y1="0" x2="1" y2="1">
              <stop offset="0" stopColor="#1f9bd8" />
              <stop offset="1" stopColor="#5fd66b" />
            </linearGradient>
          </defs>
          <circle cx="13" cy="13" r="12.500" fill="url(#edgeTop)" />
          <path d="M1 15C1 9 6 6 11 7c4 1 6 4 5 7h9c-1 7-7 11.500-12 11.500C6 25.500 1 21 1 15z" fill="#0d5ea8" />
          <path d="M10 15c0-3 2-5 5-5 2 0 3 2 2 4h-3c0 3 4 5 8 3-2 4-6 5-9 4-2-1-3-3-3-6z" fill="#3d3d3d" />
        </svg>
      </TaskApp>
      <TaskApp $w={49}>
        <svg width="22" height="20" viewBox="0 0 22 20">
          <path d="M0 1h8l2 3h12v15H0z" fill="#dca32f" />
          <path d="M0 5h22v14H0z" fill="#f5d36c" />
          <path d="M6 11h10v8h-2.500v-5h-5v5H6z" fill="#3f8fd6" />
        </svg>
      </TaskApp>
      <TaskApp $w={49}>
        <svg width="24" height="26" viewBox="0 0 24 26">
          <path d="M1 7h22v16a3 3 0 0 1-3 3H4a3 3 0 0 1-3-3z" fill="#f8f8f8" />
          <path d="M7 7V3q0-2 2-2h6q2 0 2 2v4" fill="none" stroke="#2aa3dc" strokeWidth="1.600" />
          <path d="M7 11h4.500v4.500H7z" fill="#f25022" />
          <path d="M12.500 11H17v4.500h-4.500z" fill="#7fba00" />
          <path d="M7 16.500h4.500V21H7z" fill="#00a4ef" />
          <path d="M12.500 16.500H17V21h-4.500z" fill="#ffb900" />
        </svg>
      </TaskApp>
      <TaskApp $w={49}>
        <svg width="24" height="24" viewBox="0 0 24 24">
          <path d="M0 8 12 0l12 8v16H0z" fill="#0b5fa8" />
          <path d="M0 8l12 8 12-8v16H0z" fill="#27a0e6" />
          <path d="M3 8h18l-9 6z" fill="#fff" />
        </svg>
      </TaskApp>
      <TaskApp $w={50} $open>
        <svg width="24" height="26" viewBox="0 0 24 26">
          <path d="M12 26C5 26 0 21 0 14 0 10 2 7 4 5c0 2 1 3 2 4 1-4 4-7 8-9-1 3 0 5 3 7 4 3 7 6 7 10 0 5-5 9-12 9z" fill="#ff5a36" />
          <path d="M14 0c3 3 6 5 8 8 2 3 3 6 2 9L14 6z" fill="#ffc02e" />
          <circle cx="12" cy="15" r="6.500" fill="#7b3fd0" />
          <circle cx="13" cy="15" r="3.500" fill="#3a1d9a" />
        </svg>
      </TaskApp>
      <TaskApp $w={48} $active $open>
        <svg width="24" height="26" viewBox="0 0 24 26">
          <rect width="24" height="26" rx="2" fill="#f4f6f8" />
          <g transform="translate(4 5)"><TableauLogo /></g>
        </svg>
      </TaskApp>
      <Tray>
        <svg width="26" height="26" viewBox="0 0 26 26">
          <circle cx="13" cy="14" r="10" fill="#f09a1c" />
          <ellipse cx="8" cy="6.500" rx="7.500" ry="4.500" fill="#a9c8ec" />
          <ellipse cx="18" cy="22" rx="7.500" ry="3.800" fill="#a9c8ec" />
        </svg>
        <TrayText $ml={7}>34°C</TrayText>
        <TrayText $ml={7}>Partly sunny</TrayText>
        <TrayIcon $w={28} $ml={15}>
          <Ico s={14} c="#eee" w={1.2}><path d="M2 10l5-5 5 5" /></Ico>
        </TrayIcon>
        <TrayIcon $w={22}>
          <Ico s={14} h={20} c="#eee" w={1}><path d="M3 2q4-2 8 0M3 18q4 2 8 0M2 6h8v8H2zM10 9l3-2v6l-3-2" /></Ico>
        </TrayIcon>
        <TrayIcon $w={26}>
          <Ico s={18} h={14} c="#eee" w={1}><path d="M1 2v4h4V2M3 6v5h4M2 0v2M4 0v2M7 3h10v7H7" /></Ico>
        </TrayIcon>
        <TrayIcon $w={24}>
          <Ico s={16} c="#ddd" w={1}><path d="M2 14a12 12 0 0 1 12-12M5 14a9 9 0 0 1 9-9M8 14a6 6 0 0 1 6-6M11 14a3 3 0 0 1 3-3" /></Ico>
        </TrayIcon>
        <TrayIcon $w={22}>
          <Ico s={16} c="#eee" w={1}><path d="M2 6h3l4-4v12l-4-4H2zM11 5q2 3 0 6M13 3q3 5 0 10" /></Ico>
        </TrayIcon>
        <Clock>1:40 PM<br />10/11/2023</Clock>
        <TrayIcon $w={54} $pr={12}>
          <Ico s={18} c="#fff" w={1.1}><path d="M2 2h14v12h-5l-2 3-2-3H2z" /></Ico>
        </TrayIcon>
      </Tray>
    </Taskbar>
  );
}

export default function App() {
  return (
    <Page>
      <GlobalStyle />
      <TitleBar>
        <TableauLogo />
        Tableau - Book1 A - Tableau license expires in 8 days
        <WindowButtons>
          <WindowButton>
            <Ico s={12} c="#222" w={1}><path d="M1 6h10" /></Ico>
          </WindowButton>
          <WindowButton>
            <Ico s={12} c="#222" w={1}><path d="M1 3h8v8H1zM3 3V1h8v8H9" /></Ico>
          </WindowButton>
          <WindowButton>
            <Ico s={12} c="#222" w={1}><path d="M1 1l10 10M11 1 1 11" /></Ico>
          </WindowButton>
        </WindowButtons>
      </TitleBar>
      <MenuBar>
        {['File', 'Data', 'Worksheet', 'Dashboard', 'Story', 'Analysis', 'Map', 'Format', 'Server', 'Window', 'Help'].map(m => (
          <span key={m}>{m}</span>
        ))}
      </MenuBar>
      <TopToolbar />
      <Workspace>
        <DataSidebar />
        <CardColumn>
          <Card $h={62}><CardTitle>Pages</CardTitle></Card>
          <Card $h={78}><CardTitle>Filters</CardTitle></Card>
          <MarksCard />
        </CardColumn>
        <MainColumn>
          <Shelf $h={27} $mb={7} $flat>
            <ShelfLabel>
              <Ico s={12} c="#555" w={1.6}><path d="M2 4v8M6 4v8M10 4v8M2 1v1.500M6 1v1.500M10 1v1.500" /></Ico>
              Columns
            </ShelfLabel>
            <ShelfPills>
              <Pill $bg="#00b180" $w={148} $radius="10px 0 0 10px">SUM(Grocery)</Pill>
              <Pill $bg="#00b180" $w={148} $radius="0 10px 10px 0">SUM(Detergents Pap..</Pill>
            </ShelfPills>
          </Shelf>
          <Shelf $h={28} $mb={6}>
            <ShelfLabel>
              <Ico s={12} c="#555" w={1.3}><path d="M1 3h10M1 6h10M1 9h10" /></Ico>
              Rows
            </ShelfLabel>
            <ShelfPills>
              <Pill $bg="#4996b2" $w={148}>Channel</Pill>
            </ShelfPills>
          </Shelf>
          <ChartRow>
            <ChartCard>
              <ChartTitle>Channel Wise Detergents Paper And Grocery</ChartTitle>
              <Chart />
            </ChartCard>
            <Legend>
              <LegendTitle>Measure Names</LegendTitle>
              <LegendRow><Swatch $color="#ffabb5" />Detergents Paper</LegendRow>
              <LegendRow><Swatch $color="#7295b9" />Grocery</LegendRow>
            </Legend>
          </ChartRow>
        </MainColumn>
      </Workspace>
      <TabStrip />
      <Status />
      <WindowsTaskbar />
    </Page>
  );
}
